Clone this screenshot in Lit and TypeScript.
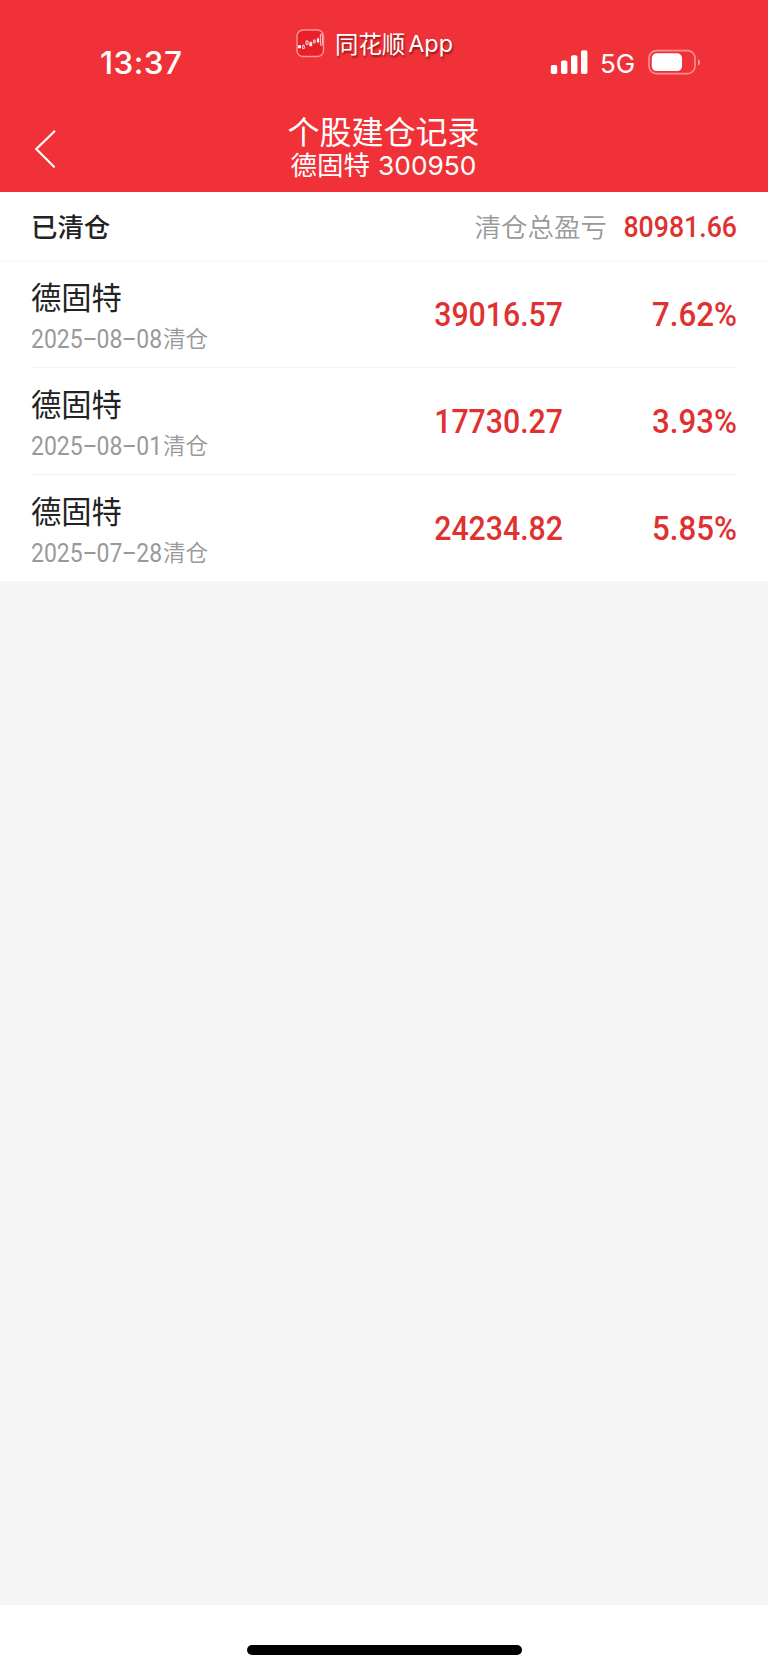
import { LitElement, html, css, svg } from "lit";
import { customElement, property } from "lit/decorators.js";

interface Position {
  name: string;
  date: string;
  profit: string;
  rate: string;
}

const POSITIONS: Position[] = [
  { name: "德固特", date: "2025-08-08", profit: "39016.57", rate: "7.62%" },
  { name: "德固特", date: "2025-08-01", profit: "17730.27", rate: "3.93%" },
  { name: "德固特", date: "2025-07-28", profit: "24234.82", rate: "5.85%" },
];

@customElement("status-bar")
class StatusBar extends LitElement {
  static styles = css`
    :host { display: grid; grid-template-columns: 296px 1fr 218px; height: 104px; color: #fff; }
    .time { padding: 43px 0 0 100px; font: 550 31.5px/40px Inter, sans-serif; letter-spacing: 0.5px; }
    .brand { display: flex; align-items: flex-start; padding-top: 29px; }
    .logo { flex: none; display: block; }
    .cjk { margin: -1px 0 0 10px; font: 400 23.4px/30px "Noto Sans CJK SC", sans-serif; text-shadow: 1px 2px 2px rgba(80, 0, 0, .6); }
    .latin { margin-left: 3px; font: 400 23.4px/30px Inter, sans-serif; text-shadow: 1px 2px 2px rgba(80, 0, 0, .6); }
    .right { display: flex; align-items: flex-start; padding-top: 46px; }
    .net { margin: 1px 0 0 12px; width: 47px; font: 400 26px/34px Inter, sans-serif; }
    svg { display: block; flex: none; }
  `;
  render() {
    return html`
      <div class="time">13:37</div>
      <div class="brand">
        <svg class="logo" width="29" height="29" viewBox="0 0 29 29">
          <rect x="1" y="1" width="26.5" height="26.5" rx="6" fill="#e8202a" stroke="#ff9292" stroke-width="1.4" />
          <path d="M2 16.300h3v3H2zM13.400 13.300h2.800v3.800h-2.800zM20.900 9.500h2.200v3.800h-2.200z" fill="#fff" />
          <path d="M6.600 16.500h1.700v3H6.600zM10 12h2v3.400h-2zM17.600 11.300h1.600v2.600h-1.600z" fill="none" stroke="#fff" stroke-width=".8" />
          <path d="M7.450 15.400v1M11 10.800v1.200M14.800 12v6M18.400 10v1.200M22 8.300v6" stroke="#ffd5d2" stroke-width=".6" />
          <rect x="24.400" y="5" width="2" height="11.500" rx="1" fill="none" stroke="#fff" stroke-width=".8" />
        </svg>
        <span class="cjk">同花顺</span><span class="latin">App</span>
      </div>
      <div class="right">
        <svg width="38" height="30" viewBox="0 0 38 30">
          ${[[0.8, 19], [11, 14.5], [21, 9.3], [31, 4.3]].map(
            ([x, y]) => svg`<rect x=${x} y=${y} width="6.4" height=${28 - y} rx="1.8" fill="#fff" />`
          )}
        </svg>
        <span class="net">5G</span>
        <svg width="54" height="30" viewBox="0 0 54 30">
          <rect x="2" y="4.700" width="46" height="23" rx="7.500" fill="none" stroke="#fff" stroke-opacity=".45" stroke-width="1.700" />
          <rect x="4.800" y="7.300" width="30.200" height="17.800" rx="4.800" fill="#fff" />
          <path d="M51 13.200c2.700 1 2.700 5.300 0 6.300z" fill="#fff" fill-opacity=".5" />
        </svg>
      </div>`;
  }
}

@customElement("page-title")
class PageTitle extends LitElement {
  static styles = css`
    :host { display: grid; grid-template-columns: 240px 1fr 240px; height: 88px; color: #fff; }
    .back { padding: 25px 0 0 34px; }
    .back svg { display: block; }
    .titles { text-align: center; padding-top: 8px; margin-left: -1px; }
    .title { font: 400 32px/36px "Noto Sans CJK SC", sans-serif; }
    .sub { display: flex; justify-content: center; font: 400 26.5px/32px "Noto Sans CJK SC", sans-serif; }
    .code { margin: 1px 0 0 8px; font: 400 26.3px/34px Inter, sans-serif; }
  `;
  render() {
    return html`
      <div class="back">
        <svg width="24" height="42" viewBox="0 0 24 42">
          <path d="M20.300 2.500L2.300 20L20 37.800" fill="none" stroke="#fff" stroke-width="2.200" stroke-linecap="round" />
        </svg>
      </div>
      <div class="titles">
        <div class="title">个股建仓记录</div>
        <div class="sub"><span>德固特</span><span class="code">300950</span></div>
      </div>`;
  }
}

@customElement("position-row")
class PositionRow extends LitElement {
  @property({ attribute: false }) item!: Position;
  static styles = css`
    :host { display: grid; grid-template-columns: 1fr 200px 174px; height: 106px; border-bottom: 1px solid #f2f2f2; margin: 0 31px 0 31px; }
    :host(:last-of-type) { border-bottom: 0; }
    .name { padding-top: 16px; font: 400 30.3px/38px "Noto Sans CJK SC", sans-serif; color: #222; }
    .meta { display: flex; color: #999; margin-top: 7px; }
    .date { width: 132px; white-space: nowrap; font: 400 25.2px/34px Roboto, sans-serif; transform: scaleX(.911); transform-origin: left; }
    .dash { display: inline-block; width: 15.3px; text-align: center; font-family: Inter, sans-serif; transform: translateY(-1px) scaleX(1.5); }
    .state { margin-top: -1px; font: 350 22.6px/34px "Noto Sans CJK SC", sans-serif; }
    .num { padding-top: 32px; text-align: right; font: 500 33.5px/44px Roboto, sans-serif; color: #e03131; transform: scaleX(.903); transform-origin: right; }
    .rate { transform: scaleX(.933); }
  `;
  render() {
    const parts = this.item.date.split("-");
    return html`
      <div>
        <div class="name">${this.item.name}</div>
        <div class="meta">
          <span class="date">${parts.map((p, i) => html`${i ? html`<span class="dash">-</span>` : ""}${p}`)}</span>
          <span class="state">清仓</span>
        </div>
      </div>
      <div class="num">${this.item.profit}</div>
      <div class="num rate">${this.item.rate}</div>`;
  }
}

@customElement("app-root")
class AppRoot extends LitElement {
  static styles = css`
    :host { display: flex; flex-direction: column; height: 1670px; background: #f5f5f5; overflow: hidden; }
    .head { background: #f03238; height: 192px; }
    .list { background: #fff; height: 389px; }
    .summary { display: flex; align-items: center; height: 68px; padding: 0 31px; border-bottom: 2px solid #f8f8f8; margin-bottom: -1px; }
    .closed { font: 500 26.4px/36px "Noto Sans CJK SC", sans-serif; color: #222; flex: 1; }
    .label { font: 350 26.5px/36px "Noto Sans CJK SC", sans-serif; color: #999; }
    .total { width: 130px; padding-top: 2px; display: flex; justify-content: flex-end; font: 500 29px/38px Roboto, sans-serif; color: #e03131; transform: scaleX(.92); transform-origin: right; }
    .home { margin-top: auto; height: 65px; background: #fff; display: flex; justify-content: center; align-items: flex-start; }
    .pill { width: 275px; height: 10px; border-radius: 5px; background: #000; margin-top: 40px; }
  `;
  render() {
    return html`
      <header class="head"><status-bar></status-bar><page-title></page-title></header>
      <main class="list">
        <div class="summary">
          <span class="closed">已清仓</span>
          <span class="label">清仓总盈亏</span>
          <span class="total">80981.66</span>
        </div>
        ${POSITIONS.map((p) => html`<position-row .item=${p}></position-row>`)}
      </main>
      <footer class="home"><div class="pill"></div></footer>`;
  }
}
